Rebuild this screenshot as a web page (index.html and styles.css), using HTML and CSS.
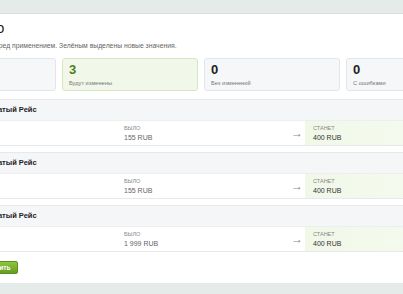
FILE: index.html
```html
<!DOCTYPE html>
<html lang="ru">
<head>
  <meta charset="UTF-8" />
  <title>Импорт цен</title>
  <link rel="stylesheet" href="styles.css">
</head>
<body>

  <div class="panel">
    <h2 class="title">Почти готово</h2>
    <p class="hint">Проверьте изменения перед применением. Зелёным выделены новые значения.</p>

    <!-- Сводка -->
    <div class="stats">
      <div class="stat"><div class="num">3</div><div class="lbl">Всего строк</div></div>
      <div class="stat changed"><div class="num">3</div><div class="lbl">Будут изменены</div></div>
      <div class="stat"><div class="num">0</div><div class="lbl">Без изменений</div></div>
      <div class="stat"><div class="num">0</div><div class="lbl">С ошибками</div></div>
    </div>

    <!-- Строки -->
    <div class="item">
      <div class="item-head">Экскурсия Богатый Рейс</div>
      <div class="item-row">
        <div class="cell-name"></div>
        <div class="cell-old"><span class="cap">Было</span><span class="val">155 RUB</span></div>
        <div class="cell-arrow">&rarr;</div>
        <div class="cell-new"><span class="cap">Станет</span><span class="val">400 RUB</span></div>
      </div>
    </div>

    <div class="item">
      <div class="item-head">Экскурсия Богатый Рейс</div>
      <div class="item-row">
        <div class="cell-name"></div>
        <div class="cell-old"><span class="cap">Было</span><span class="val">155 RUB</span></div>
        <div class="cell-arrow">&rarr;</div>
        <div class="cell-new"><span class="cap">Станет</span><span class="val">400 RUB</span></div>
      </div>
    </div>

    <div class="item">
      <div class="item-head">Экскурсия Богатый Рейс</div>
      <div class="item-row">
        <div class="cell-name"></div>
        <div class="cell-old"><span class="cap">Было</span><span class="val">1 999 RUB</span></div>
        <div class="cell-arrow">&rarr;</div>
        <div class="cell-new"><span class="cap">Станет</span><span class="val">400 RUB</span></div>
      </div>
    </div>

    <div class="actions">
      <button class="btn">Отмена</button>
      <button class="btn btn-apply">Применить</button>
    </div>
  </div>

</body>
</html>
```

FILE: styles.css
```css
/* Фон страницы */
body {
  margin: 0;
  background-color: #e4ebe9;
  font-family: 'Liberation Sans', Arial, sans-serif;
  color: #333;
  overflow: hidden;
}

.panel {
  width: 562px;
  margin: 13px 0 0 -92px;
  padding: 5px 12px 9px;
  background-color: #fff;
  border-top: 1px solid #d9e1df;
}

.title {
  margin: 0;
  font-size: 14px;
  line-height: 18px;
  font-weight: normal;
  color: #222;
}

.hint {
  margin: 4px 0 0;
  font-size: 6.8px;
  line-height: 10px;
  color: #666;
}

/* Сводка */
.stats {
  display: grid;
  grid-template-columns: repeat(4, 1fr);
  gap: 6px;
  margin-top: 7px;
}

.stat {
  height: 33px;
  box-sizing: border-box;
  padding: 4px 6px;
  background-color: #f6f7f8;
  border: 1px solid #e3e6e8;
  border-radius: 3px;
}

.stat .num {
  font-size: 13px;
  line-height: 14px;
  font-weight: bold;
  color: #222;
}

.stat .lbl {
  margin-top: 2px;
  font-size: 5.7px;
  line-height: 8px;
  color: #777;
}

.stat.changed {
  background-color: #f1f8e9;
  border-color: #d6e8c2;
}

.stat.changed .num {
  color: #4f7f1c;
}

/* Строки */
.item {
  margin: 6px -12px 0;
  border: 1px solid #e6e8ea;
}

.stats + .item {
  margin-top: 8px;
}

.item-head {
  height: 20px;
  line-height: 20px;
  padding-left: 35px;
  background-color: #f5f6f8;
  border-bottom: 1px solid #eceef0;
  font-size: 7.5px;
  font-weight: bold;
  color: #222;
}

.item-row {
  display: grid;
  grid-template-columns: 215px 1fr 14px 188px;
  height: 24px;
}

.cell-old,
.cell-new {
  display: flex;
  flex-direction: column;
  justify-content: center;
}

.cell-new {
  padding-left: 8px;
  background: linear-gradient(to right, #f1f8e8, #f6fbf1);
}

.cell-arrow {
  display: flex;
  align-items: center;
  font-size: 12px;
  color: #888;
}

.cap {
  font-size: 5.5px;
  line-height: 9px;
  text-transform: uppercase;
  color: #888;
}

.val {
  font-size: 7px;
  line-height: 10px;
  color: #666;
}

.cell-new .val {
  color: #333;
}

/* Кнопки */
.actions {
  display: flex;
  gap: 6px;
  margin-top: 9px;
}

.btn {
  height: 13px;
  padding: 0 7px;
  font-family: inherit;
  font-size: 6.5px;
  font-weight: bold;
  border-radius: 2px;
  border: 1px solid #ccc;
  background: #f3f3f3;
  color: #333;
}

.btn-apply {
  border-color: #5d8f1e;
  background: linear-gradient(#8dc63f, #669c24);
  color: #fff;
}
```
